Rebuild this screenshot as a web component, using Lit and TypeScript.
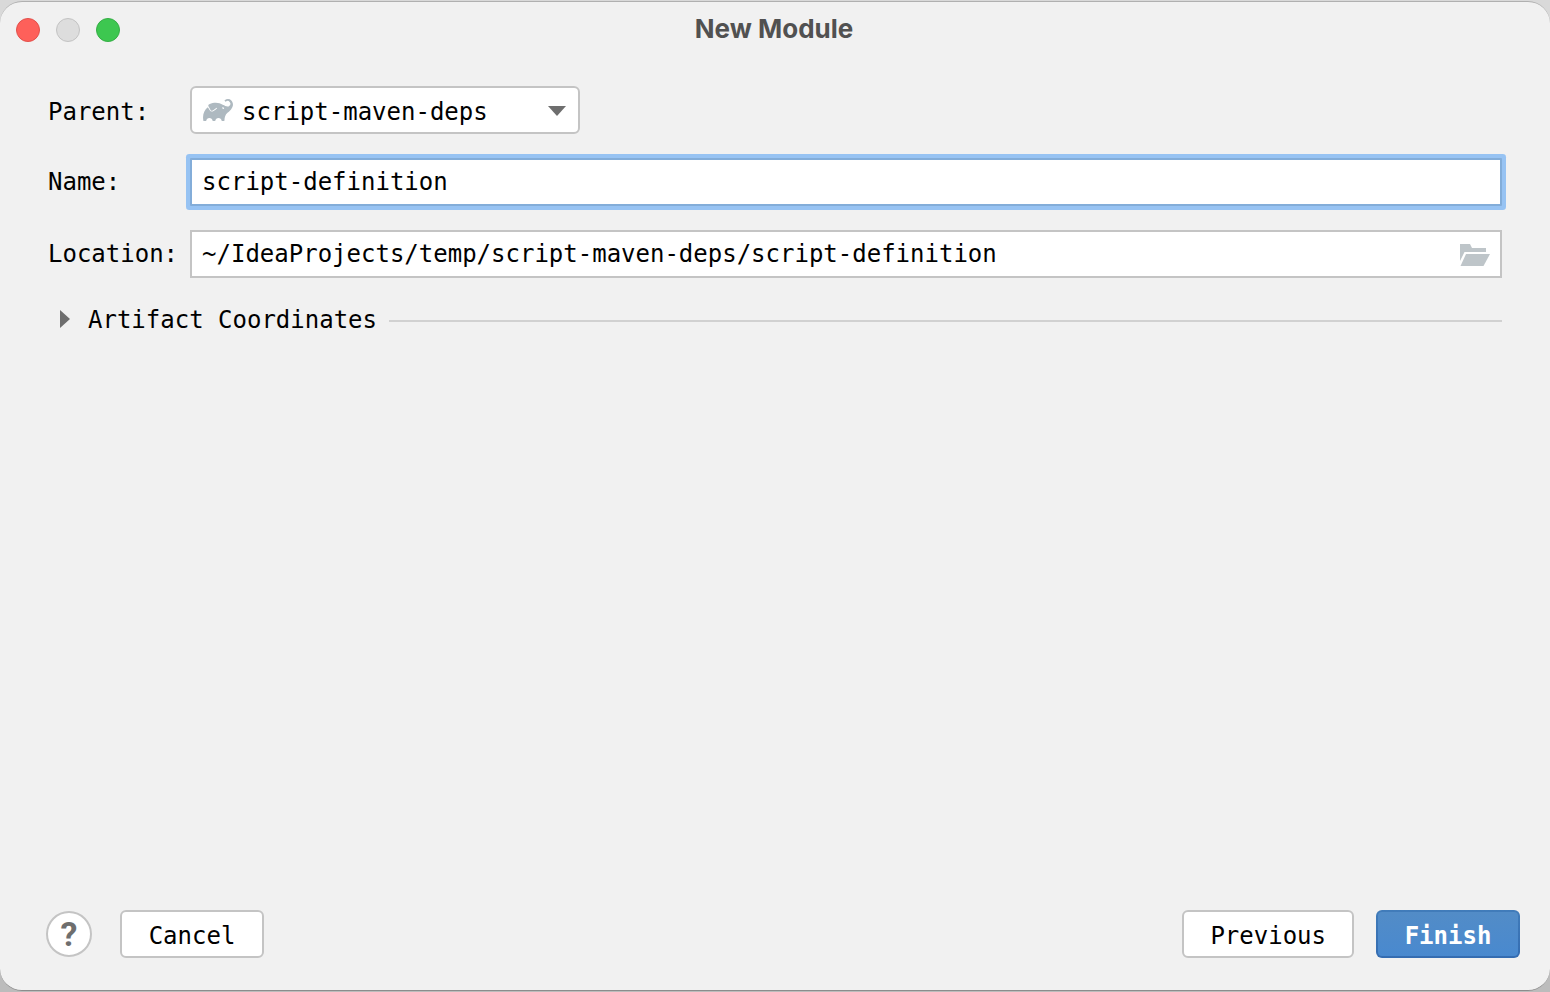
import { LitElement, html, css } from "lit";
import { customElement, state } from "lit/decorators.js";

@customElement("app-root")
export class AppRoot extends LitElement {
  static styles = css`
    :host {
      display: flex;
      min-height: 100vh;
      box-sizing: border-box;
      padding: 1px 0;
      background: linear-gradient(#d9d9d9 50%, #bcbcbc 50%);
      font-family: "DejaVu Sans Mono", "Liberation Mono", monospace;
      font-size: 24px;
      line-height: 28px;
      color: #000;
    }
    * {
      box-sizing: border-box;
    }
    button,
    input,
    select {
      font: inherit;
      color: inherit;
      margin: 0;
      outline: none;
    }
    .window {
      flex: 1;
      display: flex;
      flex-direction: column;
      background: #f1f1f1;
      border-radius: 22px;
      border-top: 1px solid #b0b0b0;
      border-bottom: 1px solid #8c8c8c;
    }
    .titlebar {
      display: grid;
      grid-template-columns: 1fr auto 1fr;
      align-items: center;
      height: 56px;
      padding: 0 16px;
    }
    .lights {
      display: flex;
      gap: 16px;
    }
    .light {
      width: 24px;
      height: 24px;
      padding: 0;
      border-radius: 50%;
      border: 1px solid;
    }
    .close {
      background: #fe605a;
      border-color: #e2504b;
    }
    .minimize {
      background: #dddddd;
      border-color: #c3c3c3;
    }
    .zoom {
      background: #3dc750;
      border-color: #35ae45;
    }
    .title {
      margin: 0;
      padding: 0 2px 2px 0;
      font-family: Inter, sans-serif;
      font-size: 26px;
      font-weight: 700;
      color: #515151;
    }
    .form {
      flex: 1;
      display: flex;
      flex-direction: column;
      padding: 28px 48px 0;
    }
    .fields {
      display: grid;
      grid-template-columns: auto 1fr;
      column-gap: 12px;
      row-gap: 24px;
      align-items: baseline;
    }
    .combo {
      display: grid;
      width: 390px;
      max-width: 100%;
      align-items: center;
    }
    .combo > * {
      grid-area: 1 / 1;
    }
    .combo svg {
      pointer-events: none;
    }
    .elephant {
      margin-left: 13px;
      fill: #aeb9c0;
    }
    .arrow {
      justify-self: end;
      margin: 2px 14px 0 0;
      fill: #6e6e6e;
    }
    .combo select {
      appearance: none;
      width: 100%;
      height: 48px;
      padding: 4px 40px 0 50px;
      background: #fff;
      border: 2px solid #c4c4c4;
      border-radius: 6px;
    }
    .text {
      display: flex;
      align-items: center;
      height: 48px;
      background: #fff;
      border: 2px solid #c4c4c4;
    }
    .text:focus-within,
    .text.active {
      border-color: #83add9;
      box-shadow: 0 0 0 4px #97c3f3;
      border-radius: 1px;
    }
    .text input {
      flex: 1;
      min-width: 0;
      height: 100%;
      padding: 0 10px;
      border: 0;
      background: none;
    }
    .browse {
      display: flex;
      padding: 2px 10px 0;
      border: 0;
      background: none;
      fill: #bec5c9;
    }
    .disclosure {
      display: flex;
      align-items: center;
      gap: 12px;
      margin-top: 28px;
    }
    .disclosure button {
      display: flex;
      align-items: center;
      gap: 18px;
      padding: 0 0 0 12px;
      border: 0;
      background: none;
    }
    .disclosure svg {
      margin-bottom: 2px;
      fill: #6e6e6e;
    }
    .rule {
      flex: 1;
      height: 2px;
      margin-top: 2px;
      background: #d1d1d1;
    }
    .footer {
      display: flex;
      align-items: center;
      padding: 0 30px 32px 46px;
      gap: 22px;
    }
    .btn {
      min-width: 144px;
      height: 48px;
      padding: 4px 26px 0;
      background: #fff;
      border: 2px solid #c4c4c4;
      border-radius: 6px;
    }
    .help {
      width: 46px;
      height: 46px;
      margin-right: 6px;
      padding: 0;
      background: #fff;
      border: 2px solid #c4c4c4;
      border-radius: 50%;
      font-family: Roboto, sans-serif;
      font-size: 34px;
      font-weight: 700;
      color: #6e6e6e;
    }
    .spacer {
      flex: 1;
    }
    .primary {
      color: #fff;
      font-weight: 700;
      border-color: transparent;
      background:
        linear-gradient(#528cc7, #4989cf) padding-box,
        linear-gradient(#417cba, #346cb1) border-box;
    }
  `;

  @state() private name = "script-definition";
  @state() private location = "~/IdeaProjects/temp/script-maven-deps/script-definition";
  @state() private expanded = false;

  render() {
    return html`
      <main class="window">
        <header class="titlebar">
          <div class="lights">
            <button class="light close" aria-label="Close"></button>
            <button class="light minimize" aria-label="Minimize" disabled></button>
            <button class="light zoom" aria-label="Zoom"></button>
          </div>
          <h1 class="title">New Module</h1>
        </header>
        <section class="form">
          <div class="fields">
            <label for="parent">Parent:</label>
            <div class="combo">
              <select id="parent">
                <option>script-maven-deps</option>
              </select>
              <svg class="elephant" width="30" height="22" viewBox="0 3.18 24 17.64" aria-hidden="true">
                <path
                  d="M22.695 4.297a3.807 3.807 0 0 0-5.29-.09.368.368 0 0 0 0 .533l.46.47a.363.363 0 0 0 .474.032 2.182 2.182 0 0 1 2.86 3.291c-3.023 3.02-7.056-5.447-16.211-1.083a1.24 1.24 0 0 0-.534 1.745l1.571 2.713a1.238 1.238 0 0 0 1.681.461l.037-.02-.029.02.688-.384a16.083 16.083 0 0 0 2.193-1.635.384.384 0 0 1 .499-.016.357.357 0 0 1 .016.534 16.435 16.435 0 0 1-2.316 1.741H8.77l-.696.39a1.958 1.958 0 0 1-.963.25 1.987 1.987 0 0 1-1.726-.989L3.9 9.696C1.06 11.72-.686 15.603.26 20.522a.363.363 0 0 0 .354.296h1.675a.363.363 0 0 0 .37-.331 2.478 2.478 0 0 1 4.915 0 .36.36 0 0 0 .357.317h1.638a.363.363 0 0 0 .357-.317 2.478 2.478 0 0 1 4.914 0 .363.363 0 0 0 .358.317h1.627a.363.363 0 0 0 .363-.357c.037-2.294.656-4.93 2.42-6.25 6.108-4.57 4.502-8.486 3.088-9.9zm-6.229 6.901l-1.165-.584a.73.73 0 1 1 1.165.587z"
                />
              </svg>
              <svg class="arrow" width="18" height="10" viewBox="0 0 18 10" aria-hidden="true">
                <path d="M0 0h18L9 10z" />
              </svg>
            </div>

            <label for="name">Name:</label>
            <div class="text active">
              <input
                id="name"
                .value=${this.name}
                @input=${(e: Event) => (this.name = (e.target as HTMLInputElement).value)}
              />
            </div>

            <label for="location">Location:</label>
            <div class="text">
              <input
                id="location"
                .value=${this.location}
                @input=${(e: Event) => (this.location = (e.target as HTMLInputElement).value)}
              />
              <button class="browse" aria-label="Browse">
                <svg width="30" height="22" viewBox="0 0 30 22" aria-hidden="true">
                  <path d="M0 0h10l2 4h14v4H4.500L0 17z" />
                  <path d="M6 10h24l-6.500 12H.5z" />
                </svg>
              </button>
            </div>
          </div>

          <div class="disclosure">
            <button aria-expanded=${this.expanded} @click=${() => (this.expanded = !this.expanded)}>
              <svg width="10" height="18" viewBox="0 0 10 18" aria-hidden="true">
                <path d="M0 0l10 9L0 18z" />
              </svg>
              Artifact Coordinates
            </button>
            <div class="rule"></div>
          </div>
        </section>
        <footer class="footer">
          <button class="help" aria-label="Help">?</button>
          <button class="btn">Cancel</button>
          <span class="spacer"></span>
          <button class="btn">Previous</button>
          <button class="btn primary">Finish</button>
        </footer>
      </main>
    `;
  }
}
